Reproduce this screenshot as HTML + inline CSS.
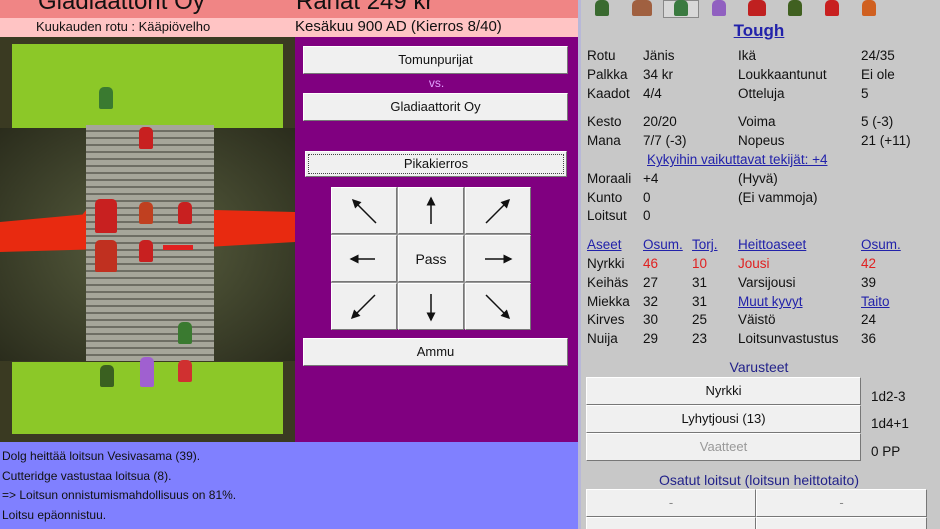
<!DOCTYPE html>
<html><head><meta charset="utf-8"><style>
*{margin:0;padding:0;box-sizing:border-box}
html,body{width:940px;height:529px;overflow:hidden}
body{background:#c8c8c8;font-family:"Liberation Sans",sans-serif;position:relative;font-size:13px;color:#111}
.a{position:absolute}
.btn{position:absolute;background:#f0f0f0;border:1px solid #fff;border-right-color:#777;border-bottom-color:#777;text-align:center;font-size:13px}
.r{position:absolute;font-size:13.5px;white-space:nowrap}
.u{color:#2222aa;text-decoration:underline}
.red{color:#e02020}
.sp{position:absolute;width:14px;height:22px;border-radius:5px 5px 2px 2px}
.g{position:static;display:flex;align-items:center;justify-content:center}
</style></head><body>
<div class="a" style="left:0;top:0;width:578px;height:18px;background:#f08585;overflow:hidden">
<div class="a" style="left:38px;top:-12px;font-size:24px">Gladiaattorit Oy</div>
<div class="a" style="left:296px;top:-12px;font-size:24px">Rahat 249 kr</div></div>
<div class="a" style="left:0;top:18px;width:578px;height:19px;background:#ffc4c4">
<div class="a" style="left:36px;top:1px;font-size:13px">Kuukauden rotu : Kääpiövelho</div>
<div class="a" style="left:295px;top:0;font-size:15px">Kesäkuu 900 AD (Kierros 8/40)</div></div>
<!-- board -->
<div class="a" style="left:0;top:37px;width:295px;height:405px;background:#3a3a22">
<div class="a" style="left:12px;top:7px;width:271px;height:84px;background:#8cc828"></div>
<div class="a" style="left:0;top:91px;width:295px;height:233px;background:radial-gradient(ellipse at 50% 50%,#5a6040,#2a2c1c)"></div>
<div class="a" style="left:0;top:170px;width:295px;height:50px;background:#e82a10;clip-path:polygon(0 30%,28% 15%,30% 0,100% 10%,100% 70%,70% 80%,30% 85%,0 90%)"></div>
<div class="a" style="left:86px;top:88px;width:128px;height:236px;background:repeating-linear-gradient(#a6a69a 0 5px,#6e6e64 5px 7px)"></div>
<div class="a" style="left:12px;top:325px;width:271px;height:72px;background:#8cc828"></div>
<div class="sp" style="left:99px;top:50px;background:#3a7a30"></div>
<div class="sp" style="left:139px;top:90px;background:#c82020"></div>
<div class="sp" style="left:95px;top:162px;width:22px;height:34px;background:#c82020"></div>
<div class="sp" style="left:139px;top:165px;background:#c04020"></div>
<div class="sp" style="left:178px;top:165px;background:#c82020"></div>
<div class="sp" style="left:95px;top:203px;width:22px;height:32px;background:#c03020"></div>
<div class="sp" style="left:139px;top:203px;background:#c82020"></div>
<div class="a" style="left:163px;top:208px;width:30px;height:5px;background:#e02020"></div>
<div class="sp" style="left:178px;top:285px;background:#3a7a30"></div>
<div class="sp" style="left:100px;top:328px;background:#3a6020"></div>
<div class="sp" style="left:140px;top:320px;height:30px;background:#a060d0"></div>
<div class="sp" style="left:178px;top:323px;background:#d03030"></div>
</div>
<!-- middle -->
<div class="a" style="left:295px;top:37px;width:283px;height:405px;background:#800080"></div>
<div class="btn" style="left:303px;top:46px;width:265px;height:28px;line-height:26px">Tomunpurijat</div>
<div class="a" style="left:295px;top:76px;width:283px;text-align:center;color:#e0a0ff;font-size:12px">vs.</div>
<div class="btn" style="left:303px;top:93px;width:265px;height:28px;line-height:26px">Gladiaattorit Oy</div>
<div class="btn" style="left:305px;top:151px;width:262px;height:26px;line-height:23px;outline:1px dotted #444;outline-offset:-4px">Pikakierros</div>
<svg width="0" height="0" style="position:absolute"><defs><marker id="m" markerWidth="6" markerHeight="6" refX="5" refY="3" orient="auto"><path d="M0,0 L6,3 L0,6z" fill="#111"/></marker></defs></svg>
<div class="a" style="left:331px;top:187px;width:199px;height:142px;display:grid;grid-template-columns:66px 66px 66px;grid-template-rows:47px 47px 47px;gap:1px;background:#999">
<div class="btn g"><svg width="30" height="30"><line x1="27" y1="27" x2="4" y2="4" stroke="#111" stroke-width="1.5" marker-end="url(#m)"/></svg></div>
<div class="btn g"><svg width="30" height="30"><line x1="15" y1="28" x2="15" y2="2" stroke="#111" stroke-width="1.5" marker-end="url(#m)"/></svg></div>
<div class="btn g"><svg width="30" height="30"><line x1="3" y1="27" x2="26" y2="4" stroke="#111" stroke-width="1.5" marker-end="url(#m)"/></svg></div>
<div class="btn g"><svg width="30" height="30"><line x1="26" y1="15" x2="2" y2="15" stroke="#111" stroke-width="1.5" marker-end="url(#m)"/></svg></div>
<div class="btn g" style="font-size:14px">Pass</div>
<div class="btn g"><svg width="30" height="30"><line x1="2" y1="15" x2="28" y2="15" stroke="#111" stroke-width="1.5" marker-end="url(#m)"/></svg></div>
<div class="btn g"><svg width="30" height="30"><line x1="26" y1="3" x2="3" y2="26" stroke="#111" stroke-width="1.5" marker-end="url(#m)"/></svg></div>
<div class="btn g"><svg width="30" height="30"><line x1="15" y1="2" x2="15" y2="28" stroke="#111" stroke-width="1.5" marker-end="url(#m)"/></svg></div>
<div class="btn g"><svg width="30" height="30"><line x1="3" y1="3" x2="26" y2="26" stroke="#111" stroke-width="1.5" marker-end="url(#m)"/></svg></div>
</div>
<div class="btn" style="left:303px;top:338px;width:265px;height:28px;line-height:26px">Ammu</div>
<!-- log -->
<div class="a" style="left:0;top:442px;width:578px;height:87px;background:#8080ff;font-size:12px;line-height:19.5px;padding:5px 0 0 2px">
Dolg heittää loitsun Vesivasama (39).<br>Cutteridge vastustaa loitsua (8).<br>=&gt; Loitsun onnistumismahdollisuus on 81%.<br>Loitsu epäonnistuu.</div>
<!-- right -->
<div class="a" style="left:578px;top:0;width:3px;height:529px;background:#b8b8d8"></div>
<div class="sp" style="left:595px;top:0;height:16px;background:#3a6a30"></div>
<div class="sp" style="left:632px;top:0;height:16px;width:20px;background:#a06040"></div>
<div class="a" style="left:663px;top:0;width:36px;height:18px;border:1px solid #888;background:#d8d8d8"></div>
<div class="sp" style="left:674px;top:0;height:16px;background:#3a7a40"></div>
<div class="sp" style="left:712px;top:0;height:16px;background:#9060c0"></div>
<div class="sp" style="left:748px;top:0;height:16px;width:18px;background:#c02020"></div>
<div class="sp" style="left:788px;top:0;height:16px;background:#406020"></div>
<div class="sp" style="left:825px;top:0;height:16px;background:#c82020"></div>
<div class="sp" style="left:862px;top:0;height:16px;background:#d06020"></div>
<div class="a u" style="left:578px;top:21px;width:362px;text-align:center;font-size:17px;font-weight:bold">Tough</div>
<div class="r" style="left:587px;top:48px">Rotu</div><div class="r" style="left:643px;top:48px">Jänis</div><div class="r" style="left:738px;top:48px">Ikä</div><div class="r" style="left:861px;top:48px">24/35</div>
<div class="r" style="left:587px;top:67px">Palkka</div><div class="r" style="left:643px;top:67px">34 kr</div><div class="r" style="left:738px;top:67px">Loukkaantunut</div><div class="r" style="left:861px;top:67px">Ei ole</div>
<div class="r" style="left:587px;top:86px">Kaadot</div><div class="r" style="left:643px;top:86px">4/4</div><div class="r" style="left:738px;top:86px">Otteluja</div><div class="r" style="left:861px;top:86px">5</div>
<div class="r" style="left:587px;top:114px">Kesto</div><div class="r" style="left:643px;top:114px">20/20</div><div class="r" style="left:738px;top:114px">Voima</div><div class="r" style="left:861px;top:114px">5 (-3)</div>
<div class="r" style="left:587px;top:133px">Mana</div><div class="r" style="left:643px;top:133px">7/7 (-3)</div><div class="r" style="left:738px;top:133px">Nopeus</div><div class="r" style="left:861px;top:133px">21 (+11)</div>
<div class="r u" style="left:647px;top:152px">Kykyihin vaikuttavat tekijät: +4</div>
<div class="r" style="left:587px;top:171px">Moraali</div><div class="r" style="left:643px;top:171px">+4</div><div class="r" style="left:738px;top:171px">(Hyvä)</div>
<div class="r" style="left:587px;top:190px">Kunto</div><div class="r" style="left:643px;top:190px">0</div><div class="r" style="left:738px;top:190px">(Ei vammoja)</div>
<div class="r" style="left:587px;top:208px">Loitsut</div><div class="r" style="left:643px;top:208px">0</div>
<div class="r u" style="left:587px;top:237px">Aseet</div><div class="r u" style="left:643px;top:237px">Osum.</div><div class="r u" style="left:692px;top:237px">Torj.</div><div class="r u" style="left:738px;top:237px">Heittoaseet</div><div class="r u" style="left:861px;top:237px">Osum.</div>
<div class="r" style="left:587px;top:256px">Nyrkki</div><div class="r red" style="left:643px;top:256px">46</div><div class="r red" style="left:692px;top:256px">10</div><div class="r red" style="left:738px;top:256px">Jousi</div><div class="r red" style="left:861px;top:256px">42</div>
<div class="r" style="left:587px;top:275px">Keihäs</div><div class="r" style="left:643px;top:275px">27</div><div class="r" style="left:692px;top:275px">31</div><div class="r" style="left:738px;top:275px">Varsijousi</div><div class="r" style="left:861px;top:275px">39</div>
<div class="r" style="left:587px;top:294px">Miekka</div><div class="r" style="left:643px;top:294px">32</div><div class="r" style="left:692px;top:294px">31</div><div class="r u" style="left:738px;top:294px">Muut kyvyt</div><div class="r u" style="left:861px;top:294px">Taito</div>
<div class="r" style="left:587px;top:312px">Kirves</div><div class="r" style="left:643px;top:312px">30</div><div class="r" style="left:692px;top:312px">25</div><div class="r" style="left:738px;top:312px">Väistö</div><div class="r" style="left:861px;top:312px">24</div>
<div class="r" style="left:587px;top:331px">Nuija</div><div class="r" style="left:643px;top:331px">29</div><div class="r" style="left:692px;top:331px">23</div><div class="r" style="left:738px;top:331px">Loitsunvastustus</div><div class="r" style="left:861px;top:331px">36</div>
<div class="a" style="left:578px;top:359px;width:362px;text-align:center;color:#22228a;font-size:14px">Varusteet</div>
<div class="btn" style="left:586px;top:377px;width:275px;height:28px;line-height:26px">Nyrkki</div>
<div class="btn" style="left:586px;top:405px;width:275px;height:28px;line-height:26px">Lyhytjousi (13)</div>
<div class="btn" style="left:586px;top:433px;width:275px;height:28px;line-height:26px;color:#999">Vaatteet</div>
<div class="r" style="left:871px;top:389px">1d2-3</div>
<div class="r" style="left:871px;top:416px">1d4+1</div>
<div class="r" style="left:871px;top:444px">0 PP</div>
<div class="a" style="left:578px;top:472px;width:362px;text-align:center;color:#22228a;font-size:14px">Osatut loitsut (loitsun heittotaito)</div>
<div class="btn" style="left:586px;top:489px;width:170px;height:28px;line-height:26px;color:#888">-</div>
<div class="btn" style="left:756px;top:489px;width:171px;height:28px;line-height:26px;color:#888">-</div>
<div class="btn" style="left:586px;top:517px;width:170px;height:12px;border-bottom:none"></div>
<div class="btn" style="left:756px;top:517px;width:171px;height:12px;border-bottom:none"></div>
</body></html>
